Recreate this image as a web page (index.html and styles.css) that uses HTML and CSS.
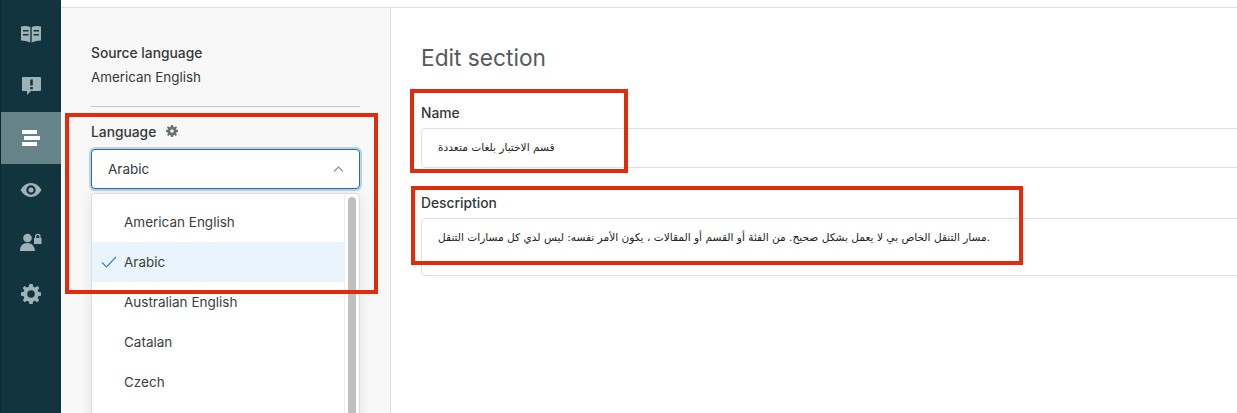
FILE: index.html
```html
<!DOCTYPE html>
<html lang="en">
<head>
<meta charset="utf-8">
<title>Edit section</title>
<link rel="stylesheet" href="styles.css">
</head>
<body>
<div class="app">
  <nav class="rail">
    <a class="rail-item"><svg width="22" height="18" viewBox="0 0 22 18"><path fill-rule="evenodd" d="M1 1.500 Q6 .5 10.300 2 V17.500 Q6 15.500 1 15.500 Z M3 5 V6.500 H8.500 V5 Z M3 9 V10.500 H8.500 V9 Z M21 1.500 Q16 .5 11.700 2 V17.500 Q16 15.500 21 15.500 Z M13.500 5 V6.500 H19 V5 Z M13.500 9 V10.500 H19 V9 Z"/></svg></a>
    <a class="rail-item"><svg width="22" height="20" viewBox="0 0 22 20"><path fill-rule="evenodd" d="M3 1 H20 Q21 1 21 2 V14 Q21 15 20 15 H11 L7 19 V15 H3 Q2 15 2 14 V2 Q2 1 3 1 Z M10.200 3.500 V9.500 H12.800 V3.500 Z M10.200 11 V13.200 H12.800 V11 Z"/></svg></a>
    <a class="rail-item rail-item-active"><svg width="18" height="16" viewBox="0 0 18 16"><path d="M0 0 H15 V4 H0 Z M2 6 H18 V10 H2 Z M0 12 H15 V16 H0 Z"/></svg></a>
    <a class="rail-item"><svg width="22" height="14" viewBox="0 0 22 14"><path fill-rule="evenodd" d="M11 0 Q17.500 0 21.500 7 Q17.500 14 11 14 Q4.500 14 .5 7 Q4.500 0 11 0 Z M11 2.300 A4.700 4.700 0 1 0 11 11.700 A4.700 4.700 0 1 0 11 2.300 Z M11 4.500 A2.500 2.500 0 1 1 11 9.500 A2.500 2.500 0 1 1 11 4.500 Z"/></svg></a>
    <a class="rail-item"><svg width="22" height="18" viewBox="0 0 22 18"><circle cx="7.500" cy="5" r="4.300"/><path d="M0 18 Q0 10 7.500 10 Q14 10 15 18 Z"/><path fill-rule="evenodd" d="M14 5 H15 V3.500 A2.800 2.800 0 0 1 20.600 3.500 V5 H21.500 V11 H14 Z M16.300 5 H19.300 V3.500 A1.500 1.500 0 0 0 16.300 3.500 Z"/></svg></a>
    <a class="rail-item"><svg width="20" height="20" viewBox="0 0 24 24"><path fill-rule="evenodd" d="M10 0 H14 L14.700 3.300 L17 4.300 L19.900 2.400 L22 4.800 L20 7.400 L21 9.700 L24 10 V14 L21 14.500 L20 16.800 L21.800 19.600 L19.400 22 L16.800 20 L14.500 21 L14 24 H10 L9.500 21 L7.200 20 L4.600 22 L2.200 19.600 L4 16.800 L3 14.500 L0 14 V10 L3 9.700 L4 7.400 L2 4.800 L4.100 2.400 L7 4.300 L9.300 3.300 Z M12 7.500 A4.500 4.500 0 1 0 12 16.500 A4.500 4.500 0 1 0 12 7.500 Z"/></svg></a>
  </nav>
  <div class="page">
    <div class="topbar"></div>
    <div class="content">
      <aside class="sidebar">
        <h2 class="label">Source language</h2>
        <p class="source-value">American English</p>
        <hr class="divider">
        <div class="language-head">
          <span class="label">Language</span>
          <svg class="cog" width="12" height="12" viewBox="0 0 24 24"><path fill-rule="evenodd" d="M10 0 H14 L14.700 3.300 L17 4.300 L19.900 2.400 L22 4.800 L20 7.400 L21 9.700 L24 10 V14 L21 14.500 L20 16.800 L21.800 19.600 L19.400 22 L16.800 20 L14.500 21 L14 24 H10 L9.500 21 L7.200 20 L4.600 22 L2.200 19.600 L4 16.800 L3 14.500 L0 14 V10 L3 9.700 L4 7.400 L2 4.800 L4.100 2.400 L7 4.300 L9.300 3.300 Z M12 8.500 A3.500 3.500 0 1 0 12 15.500 A3.500 3.500 0 1 0 12 8.500 Z"/></svg>
        </div>
        <div class="select">
          <span>Arabic</span>
          <svg width="11" height="6" viewBox="0 0 11 6"><path d="M1 5.500 L5.500 1 L10 5.500" fill="none" stroke="#8a8f92" stroke-width="1.100"/></svg>
        </div>
        <div class="menu">
          <ul class="options">
            <li class="option">American English</li>
            <li class="option option-selected"><svg class="check" width="16" height="12" viewBox="0 0 16 12"><path d="M1 6.500 L5.500 11 L15 1" fill="none" stroke="#3f7fb5" stroke-width="1.100"/></svg>Arabic</li>
            <li class="option">Australian English</li>
            <li class="option">Catalan</li>
            <li class="option">Czech</li>
          </ul>
          <div class="scrollbar"><div class="thumb"></div></div>
        </div>
      </aside>
      <main class="main">
        <h1 class="title">Edit section</h1>
        <div class="field">
          <label class="label">Name</label>
          <div class="input input-name">قسم الاختبار بلغات متعددة</div>
        </div>
        <div class="field">
          <label class="label">Description</label>
          <div class="input input-description"><span dir="ltr">مسار التنقل الخاص بي لا يعمل بشكل صحيح. من الفئة أو القسم أو المقالات ، يكون الأمر نفسه: ليس لدي كل مسارات التنقل.</span></div>
        </div>
      </main>
    </div>
  </div>
  <div class="mark mark-language"></div>
  <div class="mark mark-name"></div>
  <div class="mark mark-description"></div>
</div>
</body>
</html>
```
FILE: styles.css
```css
* { box-sizing: border-box; }
html, body { margin: 0; height: 413px; overflow: hidden; }
body { font-family: Inter, "Liberation Sans", sans-serif; font-size: 14px; color: #2f3437; background: #fff; }
.app { position: relative; display: flex; width: 1237px; height: 413px; overflow: hidden; }

.rail { width: 61px; flex: none; background: #12343f; border-left: 1px solid #0c2a35; padding-top: 8px; display: flex; flex-direction: column; }
.rail-item { height: 52px; display: flex; align-items: center; justify-content: center; fill: #9fb2b8; }
.rail-item-active { background: #668389; fill: #fff; }

.page { flex: 1; min-width: 0; display: flex; flex-direction: column; }
.topbar { height: 8px; flex: none; background: #fff; border-bottom: 1px solid #dedfe0; }
.content { flex: 1; display: flex; min-height: 0; }

.sidebar { width: 330px; flex: none; background: #f8f8f8; border-right: 1px solid #dedfe0; padding: 37px 30px 0 30px; overflow: hidden; }
.label { display: block; margin: 0; font-size: 13.800px; line-height: 16px; font-weight: 500; color: #33383b; }
.source-value { margin: 8px 0 0; font-size: 13.400px; line-height: 16px; color: #33383b; }
.divider { margin: 21px 0 0; border: 0; border-top: 1px solid #c6c7c8; }
.language-head { display: flex; align-items: center; gap: 10px; margin-top: 17px; height: 16px; }
.cog { fill: #6b7276; margin-bottom: 2px; }
.select { display: flex; align-items: center; justify-content: space-between; height: 40px; margin-top: 9px; padding: 0 15px 0 16px; background: #fff; border: 1px solid #34699a; border-radius: 4px; box-shadow: 0 0 0 2px #b5d3ea; font-size: 13.500px; line-height: 18px; color: #33383b; }
.menu { display: flex; height: 300px; margin-top: 4px; background: #fff; border: 1px solid #dcdddd; border-radius: 4px; box-shadow: 0 0 14px rgba(0, 0, 0, .08); }
.options { flex: 1; margin: 0; padding: 8px 0 0; list-style: none; }
.option { position: relative; height: 40px; padding: 0 0 1px 32px; display: flex; align-items: center; font-size: 13.500px; color: #3a3f42; }
.option-selected { background: #eaf4fc; }
.check { position: absolute; left: 9px; top: 14px; }
.scrollbar { width: 15px; flex: none; padding: 3px 3px 0 3px; border-left: 1px solid #eceded; }
.thumb { height: 300px; width: 8px; background: #bfbfbf; border-radius: 4px 4px 0 0; }

.main { flex: 1; min-width: 0; overflow: hidden; padding: 35px 0 0 30px; }
.title { margin: 0; font-size: 22.700px; line-height: 30px; font-weight: 400; color: #555a5d; }
.field { margin-top: 27px; }
.title + .field { margin-top: 32px; }
.input { width: 1000px; margin-top: 7px; padding: 0 16px; background: #fff; border: 1px solid #dedfe0; border-radius: 4px; font-family: "DejaVu Sans", sans-serif; font-size: 10.600px; color: #222; direction: ltr; }
.input-name { height: 40px; line-height: 36px; }
.input-description { height: 58px; line-height: 36px; }

.mark { position: absolute; border: 4px solid #e32b0c; pointer-events: none; }
.mark-language { left: 65px; top: 113px; width: 313px; height: 181px; }
.mark-name { left: 410px; top: 89px; width: 218px; height: 84px; }
.mark-description { left: 411px; top: 186px; width: 612px; height: 79px; }
```
